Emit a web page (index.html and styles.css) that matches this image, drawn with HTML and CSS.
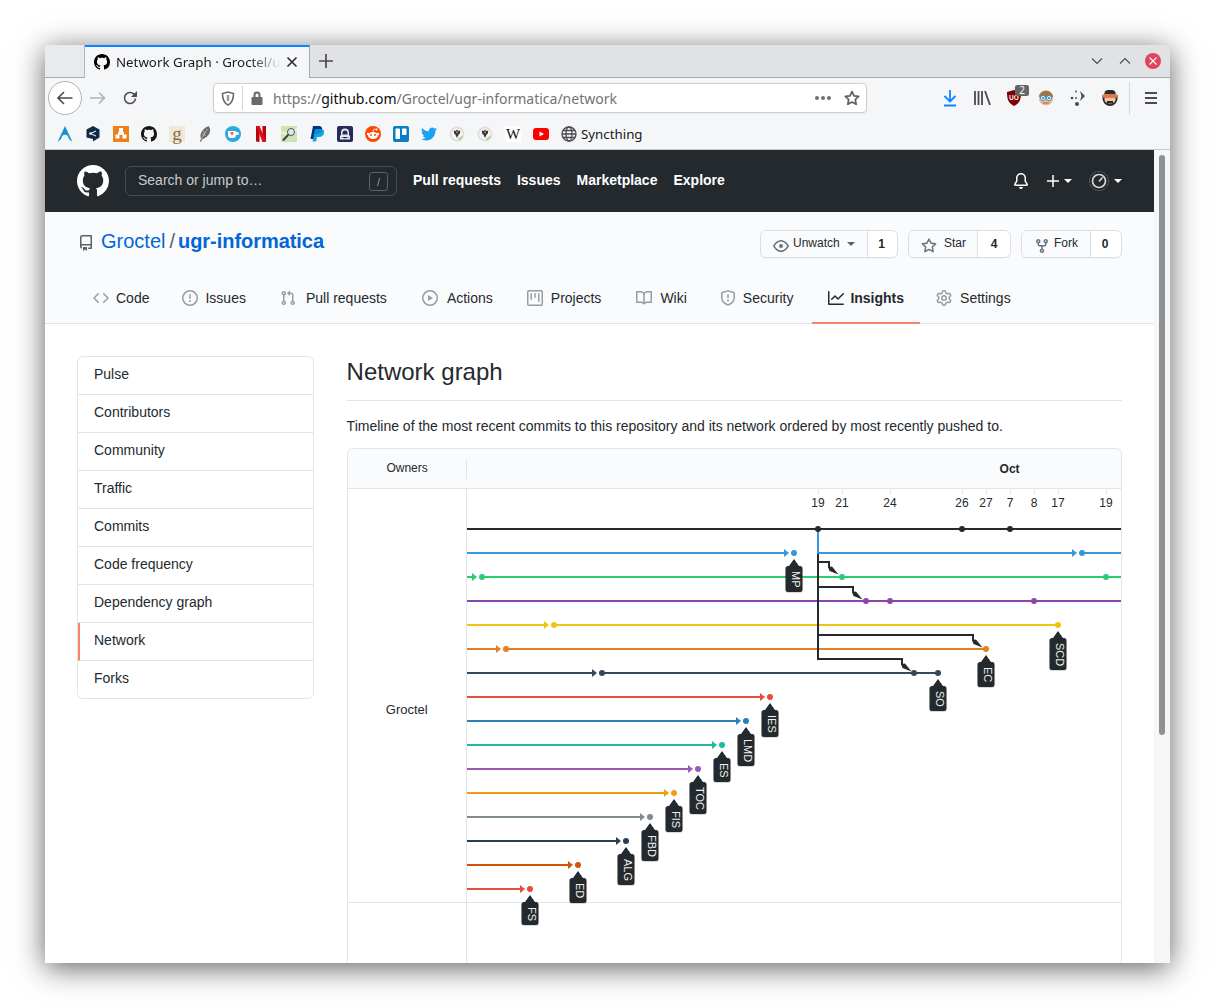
FILE: index.html
```html
<!DOCTYPE html>
<html lang="en">
<head>
<meta charset="utf-8">
<title>Network Graph · Groctel/ugr-informatica</title>
<link rel="stylesheet" href="styles.css">
</head>
<body>
<svg class="sprites" width="0" height="0" aria-hidden="true">
  <defs>
    <symbol id="i-mark" viewBox="0 0 16 16"><path d="M8 0C3.58 0 0 3.58 0 8c0 3.54 2.29 6.53 5.47 7.59.4.07.55-.17.55-.38 0-.19-.01-.82-.01-1.49-2.01.37-2.53-.49-2.69-.94-.09-.23-.48-.94-.82-1.13-.28-.15-.68-.52-.01-.53.63-.01 1.08.58 1.23.82.72 1.21 1.87.87 2.33.66.07-.52.28-.87.51-1.07-1.78-.2-3.64-.89-3.64-3.95 0-.87.31-1.59.82-2.15-.08-.2-.36-1.02.08-2.12 0 0 .67-.21 2.2.82.64-.18 1.32-.27 2-.27.68 0 1.36.09 2 .27 1.53-1.04 2.2-.82 2.2-.82.44 1.1.16 1.92.08 2.12.51.56.82 1.27.82 2.15 0 3.07-1.87 3.75-3.65 3.95.29.25.54.73.54 1.48 0 1.07-.01 1.93-.01 2.2 0 .21.15.46.55.38A8.013 8.013 0 0016 8c0-4.42-3.58-8-8-8z"/></symbol>
    <symbol id="i-crest" viewBox="0 0 16 16"><circle cx="8" cy="8" r="7.500" fill="#dedede"/><circle cx="8" cy="8" r="5.800" fill="#f4f4f4"/><path d="M8 3.500l1.200 1.400 2.100-.4-.5 3-1.300 1.200L8 12 6.500 8.700 5.200 7.500l-.5-3 2.100.4z" fill="#3a3431"/><path d="M7.200 5.300h1.600v2H7.200z" fill="#c8873a"/><path d="M9 12.500l2-1 2-2 .5 2-3 3z" fill="#a9d18e"/></symbol>
  </defs>
</svg>

<div class="window">
  <div class="tabbar">
    <div class="tab-spacer"></div>
    <div class="tab">
      <svg class="fav" width="16" height="16"><use href="#i-mark"/></svg>
      <span class="tab-title">Network Graph · Groctel/u</span>
      <svg class="tab-x" width="12" height="12" viewBox="0 0 12 12"><path d="M1.500 1.500l9 9m0-9l-9 9"/></svg>
    </div>
    <svg class="newtab" width="16" height="16" viewBox="0 0 16 16"><path d="M8 1v14M1 8h14"/></svg>
    <div class="winctl">
      <svg class="chev" width="12" height="8" viewBox="0 0 12 8"><path d="M1 1.500l5 5 5-5"/></svg>
      <svg class="chev up" width="12" height="8" viewBox="0 0 12 8"><path d="M1 6.500l5-5 5 5"/></svg>
      <svg class="close" width="16" height="16" viewBox="0 0 16 16"><circle cx="8" cy="8" r="8"/><path d="M4.500 4.500l7 7m0-7l-7 7"/></svg>
    </div>
  </div>

  <div class="toolbar">
    <div class="backbtn"><svg class="tb" width="18" height="16" viewBox="0 0 18 16"><path d="M16.500 8H2M8 2L2 8l6 6"/></svg></div>
    <svg class="tb fwd" width="16" height="14" viewBox="0 0 16 14"><path d="M0 7h14M9 1.500L14.500 7 9 12.500"/></svg>
    <svg class="tb reload" width="16" height="16" viewBox="0 0 16 16"><path d="M13.500 8.500a5.500 5.500 0 11-1.800-4.600L14 6"/><path class="solid" d="M15 1v6H9z"/></svg>
    <div class="urlbar">
      <svg class="shield" width="14" height="15" viewBox="0 0 14 15"><path d="M7 1l5.500 1.500c0 6-1 9.500-5.500 11.500C2.500 12 1.500 8.500 1.500 2.500z"/><path class="thin" d="M7 4v6"/></svg>
      <span class="urlsep"></span>
      <svg class="lock" width="12" height="14" viewBox="0 0 12 14"><path d="M2.500 6V4a3.500 3.500 0 017 0v2h1a1 1 0 011 1v6a1 1 0 01-1 1h-9a1 1 0 01-1-1V7a1 1 0 011-1zm2 0h3V4a1.500 1.500 0 00-3 0z"/></svg>
      <span class="url">https://<b>github.com</b>/Groctel/ugr-informatica/network</span>
      <span class="dots"><i></i><i></i><i></i></span>
      <svg class="urlstar" width="16" height="16" viewBox="0 0 16 16"><path d="M8 1.500l2 4.300 4.700.6-3.400 3.200.9 4.700L8 12l-4.200 2.300.9-4.700L1.300 6.400 6 5.800z"/></svg>
    </div>
    <div class="tb-right">
      <span class="tbi"><svg width="16" height="18" viewBox="0 0 16 18"><path class="dl" d="M8 1v11M2.500 7L8 12.500 13.500 7M2 16.500h12"/></svg></span>
      <span class="tbi"><svg width="18" height="14" viewBox="0 0 18 14"><path class="lib" d="M2 0v14M5.500 0v14M9 0v14M12 0l5 14"/></svg></span>
      <span class="tbi ublock"><svg width="14" height="16" viewBox="0 0 14 16"><path d="M7 0l7 2c0 7-1 11-7 14C1 13 0 9 0 2z" fill="#800000"/></svg><em>UO</em><span class="badge">2</span></span>
      <span class="tbi"><svg width="16" height="16" viewBox="0 0 16 16"><circle cx="8" cy="8.500" r="7" fill="#e8b88f"/><path d="M1 7a7 6.500 0 0114 0z" fill="#a9713c"/><circle cx="5" cy="8" r="2.500" fill="#fff" stroke="#2d8dd0"/><circle cx="11" cy="8" r="2.500" fill="#fff" stroke="#2d8dd0"/><circle cx="5" cy="8" r="1" fill="#2d6ea0"/><circle cx="11" cy="8" r="1" fill="#2d6ea0"/><path d="M5 13h6" stroke="#c0653f"/></svg></span>
      <span class="tbi"><svg width="16" height="16" viewBox="0 0 16 16" fill="#4a4a4f"><path d="M10 1l5 5-5 5 1.500-5z"/><circle cx="7" cy="14" r="2"/><circle cx="2" cy="8" r="1.300"/><circle cx="6" cy="1.500" r=".9"/><circle cx="6" cy="8" r=".9"/></svg></span>
      <span class="tbi"><svg width="16" height="16" viewBox="0 0 16 16"><path d="M.5 8.500a7.500 7.500 0 0015 0V5H.5z" fill="#2b2b2b"/><path d="M3 1.500a6 4 0 0110 0l1 3H2z" fill="#2b2b2b"/><path d="M.5 4.500h15v3H.5z" fill="#f0752c"/><path d="M2.500 7.500h11v2.500a5.500 3.500 0 01-11 0z" fill="#f5c6a5"/><path d="M5 11h6v2H5z" fill="#2b2b2b"/></svg></span>
      <span class="tbsep"></span>
      <svg class="burger" width="14" height="12" viewBox="0 0 14 12"><path d="M1 1h12M1 6h12M1 11h12"/></svg>
    </div>
  </div>

  <div class="bookmarks">
    <span class="bm"><svg width="16" height="16" viewBox="0 0 16 16"><path d="M8 0l7.500 16c-2-1.500-4-3-4.500-5.500C10 8 6 8 5 10.500 4.500 13 2.500 14.500.5 16z" fill="#1793d1"/></svg></span>
    <span class="bm"><svg width="16" height="16" viewBox="0 0 16 16"><path d="M8 0l6.500 3.500v8L8 15.500V13L1.500 11.500v-8z" fill="#0f2b46"/><path d="M5.500 7.500L11 5M5.500 7.500L11 10" stroke="#fff" fill="none"/><circle cx="5.500" cy="7.500" r="1.300" fill="#fff"/></svg></span>
    <span class="bm"><svg width="16" height="16" viewBox="0 0 16 16"><path d="M0 0h16v16H0z" fill="#ee7f1a"/><path d="M6 2h4v4H6zM2.500 8.500h4v4h-4zM9.500 8.500h4v4h-4zM5 6h6v3H5z" fill="#fff"/></svg></span>
    <span class="bm"><svg width="16" height="16" fill="#161614"><use href="#i-mark"/></svg></span>
    <span class="bm bm-g">g</span>
    <span class="bm"><svg width="16" height="16" viewBox="0 0 16 16"><path d="M11.500 0c3 3 2 9-3.500 12l-3 1.500-1 2.500-1-.5 1-3C2 8 6 2 11.500 0z" fill="#6b6b6b"/><path d="M10.500 3L4 13M6 5l2 3M5 8l3.500 1.500" stroke="#ddd" stroke-width=".6" fill="none"/></svg></span>
    <span class="bm"><svg width="16" height="16" viewBox="0 0 16 16"><circle cx="8" cy="8" r="8" fill="#29abe0"/><path d="M3 5h8v4a3 3 0 01-3 3H6a3 3 0 01-3-3zM11 6h1.500a1.500 1.500 0 010 3H11" fill="#fff"/><path d="M7 6.300c-1.500-1-2.500.8-1 2L7 9.500l1-1.200c1.500-1.200.5-3-1-2z" fill="#ff5e5b"/></svg></span>
    <span class="bm"><svg width="16" height="16" viewBox="0 0 16 16"><path d="M3 0h3.500v16L3 15.500zM9.500 0H13v15.500L9.500 16z" fill="#b1060f"/><path d="M3 0h3.500l6.500 15.500L9.500 16z" fill="#e50914"/></svg></span>
    <span class="bm"><svg width="16" height="16" viewBox="0 0 16 16"><path d="M0 0h16v16H0z" fill="#cfe3b4"/><path d="M0 5l6 2 10-5v3L8 10l-8-2z" fill="#e9f1d7"/><circle cx="10" cy="6" r="3.500" fill="#dbe9f4" stroke="#555"/><path d="M7.500 8.500L2 14.500" stroke="#444" stroke-width="2"/></svg></span>
    <span class="bm"><svg width="16" height="16" viewBox="0 0 16 16"><path d="M4 0h5.500c3 0 4 2 3.500 4-.5 3-3 4-5 4H6l-1 5H1.500z" fill="#003087"/><path d="M6 3h6c2.500 0 3.500 2 3 4-.5 2.500-2.500 4-5 4H8l-.8 4.500H3.500z" fill="#009cde" opacity=".9"/></svg></span>
    <span class="bm"><svg width="16" height="16" viewBox="0 0 16 16"><rect width="16" height="16" rx="2" fill="#262a5c"/><path d="M8 2.500a4 4 0 014 4V9l1 1v3.500H3V10l1-1V6.500a4 4 0 014-4z" fill="#e4e4ee"/><path d="M5.500 7a2.500 2.500 0 015 0v1.500h-5zM4 11l4 1.500 4-1.500" fill="#262a5c"/></svg></span>
    <span class="bm"><svg width="16" height="16" viewBox="0 0 16 16"><circle cx="8" cy="8" r="8" fill="#ff4500"/><ellipse cx="8" cy="9.500" rx="5" ry="3.500" fill="#fff"/><circle cx="3" cy="8" r="1.200" fill="#fff"/><circle cx="13" cy="8" r="1.200" fill="#fff"/><circle cx="11.500" cy="3.500" r="1" fill="#fff"/><path d="M8 6l1-3 2.500.5" stroke="#fff" fill="none" stroke-width=".7"/><circle cx="6" cy="9" r="1" fill="#ff4500"/><circle cx="10" cy="9" r="1" fill="#ff4500"/></svg></span>
    <span class="bm"><svg width="16" height="16" viewBox="0 0 16 16"><rect width="16" height="16" rx="2" fill="#0c7cc7"/><rect x="2.500" y="2.500" width="4.500" height="10.500" rx=".7" fill="#fff"/><rect x="9" y="2.500" width="4.500" height="6.500" rx=".7" fill="#fff"/></svg></span>
    <span class="bm"><svg width="16" height="14" viewBox="0 0 24 20" fill="#1da1f2"><path d="M23.953 2.570a10 10 0 01-2.825.775 4.958 4.958 0 002.163-2.723c-.951.555-2.005.959-3.127 1.184a4.920 4.920 0 00-8.384 4.482C7.690 6.095 4.067 4.130 1.640 1.162a4.822 4.822 0 00-.666 2.475c0 1.710.870 3.213 2.188 4.096a4.904 4.904 0 01-2.228-.616v.060a4.923 4.923 0 003.946 4.827 4.996 4.996 0 01-2.212.085 4.936 4.936 0 004.604 3.417 9.867 9.867 0 01-6.102 2.105c-.390 0-.779-.023-1.170-.067a13.995 13.995 0 007.557 2.209c9.053 0 13.998-7.496 13.998-13.985 0-.210 0-.420-.015-.630A9.935 9.935 0 0024 2.590z"/></svg></span>
    <span class="bm"><svg width="16" height="16"><use href="#i-crest"/></svg></span>
    <span class="bm"><svg width="16" height="16"><use href="#i-crest"/></svg></span>
    <span class="bm bm-w">W</span>
    <span class="bm"><svg width="16" height="12" viewBox="0 0 16 12"><rect width="16" height="12" rx="3" fill="#f00"/><path d="M6.500 3.500L11 6l-4.500 2.500z" fill="#fff"/></svg></span>
    <span class="bm bm-sync"><svg width="16" height="16" viewBox="0 0 16 16"><g class="globe"><circle cx="8" cy="8" r="7"/><ellipse cx="8" cy="8" rx="3" ry="7"/><path d="M1 8h14M2 4.500h12M2 11.500h12"/></g></svg><span>Syncthing</span></span>
  </div>

  <div class="viewport">
    <div class="page">
      <header class="gh-head">
        <svg class="gh-logo" width="32" height="32"><use href="#i-mark"/></svg>
        <div class="search">
          <span>Search or jump to…</span>
          <kbd>/</kbd>
        </div>
        <nav class="gh-nav"><a>Pull requests</a><a>Issues</a><a>Marketplace</a><a>Explore</a></nav>
        <div class="gh-right">
          <svg class="gh-ico" width="16" height="16" viewBox="0 0 16 16"><path d="M8 16a2 2 0 001.985-1.750c.017-.137-.097-.250-.235-.250h-3.500c-.138 0-.252.113-.235.250A2 2 0 008 16z"/><path fill-rule="evenodd" d="M8 1.500A3.500 3.500 0 004.500 5v2.947c0 .346-.102.683-.294.970l-1.703 2.556a.018.018 0 00-.003.010l.001.006c0 .002.002.004.004.006a.017.017 0 00.006.004l.007.001h10.964l.007-.001a.018.018 0 00.006-.004.016.016 0 00.004-.006l.001-.007a.017.017 0 00-.003-.010l-1.703-2.554a1.750 1.750 0 01-.294-.970V5A3.500 3.500 0 008 1.500zM3 5a5 5 0 0110 0v2.947c0 .050.015.098.042.139l1.703 2.555A1.518 1.518 0 0113.482 13H2.518a1.518 1.518 0 01-1.263-2.360l1.703-2.554A.250.250 0 003 7.947V5z"/></svg>
          <svg class="gh-ico plus" width="12" height="12" viewBox="0 0 12 12"><path d="M5.250 0h1.500v5.250H12v1.500H6.750V12h-1.500V6.750H0v-1.500h5.250z"/></svg>
          <i class="caret"></i>
          <svg class="avatar" width="20" height="20" viewBox="0 0 20 20"><circle cx="10" cy="10" r="9.500" class="av-o"/><circle cx="10" cy="10" r="6.500" class="av-i"/><path class="av-i" d="M10 10.500l3.500-4"/></svg>
          <i class="caret"></i>
        </div>
      </header>

      <div class="repohead">
        <div class="repotop">
          <h1 class="reponame">
            <svg class="ico-repo" width="14" height="16" viewBox="2 0 12 16"><path fill-rule="evenodd" d="M2 2.500A2.500 2.500 0 014.500 0h8.750a.75.75 0 01.75.75v12.500a.75.75 0 01-.75.75h-2.500a.75.75 0 110-1.500h1.750v-2h-8a1 1 0 00-.714 1.700.75.75 0 01-1.072 1.050A2.495 2.495 0 012 11.500v-9zm10.500-1V9h-8c-.356 0-.694.074-1 .208V2.500a1 1 0 011-1h8zM5 12.250v3.250a.25.25 0 00.4.2l1.450-1.087a.25.25 0 01.3 0L8.600 15.700a.25.25 0 00.4-.2v-3.250a.25.25 0 00-.25-.25h-3.500a.25.25 0 00-.25.25z"/></svg>
            <a>Groctel</a><span class="slash">/</span><a class="strong">ugr-informatica</a>
          </h1>
          <div class="actions">
            <div class="btnpair">
              <span class="btn w-watch"><svg class="octi" width="16" height="16" viewBox="0 0 16 16"><path d="M1.679 7.932c.412-.621 1.242-1.750 2.366-2.717C5.175 4.242 6.527 3.500 8 3.500c1.473 0 2.824.742 3.955 1.715 1.124.967 1.954 2.096 2.366 2.717a.119.119 0 010 .136c-.412.621-1.242 1.750-2.366 2.717C10.825 11.758 9.473 12.500 8 12.500c-1.473 0-2.824-.742-3.955-1.715C2.920 9.818 2.090 8.690 1.679 8.068a.119.119 0 010-.136zM8 2c-1.981 0-3.670.992-4.933 2.078C1.797 5.169.880 6.423.430 7.100a1.619 1.619 0 000 1.798c.450.678 1.367 1.932 2.637 3.024C4.329 13.008 6.019 14 8 14c1.981 0 3.670-.992 4.933-2.078 1.270-1.091 2.187-2.345 2.637-3.023a1.619 1.619 0 000-1.798c-.450-.678-1.367-1.932-2.637-3.023C11.671 2.992 9.981 2 8 2zm0 8a2 2 0 100-4 2 2 0 000 4z"/></svg><span class="btxt">Unwatch</span><i class="caret dark"></i></span>
              <span class="count w-c1">1</span>
            </div>
            <div class="btnpair">
              <span class="btn w-star"><svg class="octi" width="16" height="16" viewBox="0 0 16 16"><path fill-rule="evenodd" d="M8 .250a.750.750 0 01.673.418l1.882 3.815 4.210.612a.750.750 0 01.416 1.279l-3.046 2.970.719 4.192a.750.750 0 01-1.088.791L8 12.347l-3.766 1.980a.750.750 0 01-1.088-.790l.720-4.194L.818 6.374a.750.750 0 01.416-1.280l4.210-.611L7.327.668A.750.750 0 018 .250zm0 2.445L6.615 5.500a.750.750 0 01-.564.410l-3.097.450 2.240 2.184a.750.750 0 01.216.664l-.528 3.084 2.769-1.456a.750.750 0 01.698 0l2.770 1.456-.530-3.084a.750.750 0 01.216-.664l2.240-2.183-3.096-.450a.750.750 0 01-.564-.410L8 2.694v.001z"/></svg><span class="btxt">Star</span></span>
              <span class="count w-c2">4</span>
            </div>
            <div class="btnpair">
              <span class="btn w-fork"><svg class="octi" width="16" height="16" viewBox="0 0 16 16"><path fill-rule="evenodd" d="M5 3.250a.750.750 0 11-1.500 0 .750.750 0 011.500 0zm0 2.122a2.250 2.250 0 10-1.500 0v.878A2.250 2.250 0 005.750 8.500h1.500v2.128a2.251 2.251 0 101.500 0V8.500h1.500a2.250 2.250 0 002.250-2.250v-.878a2.250 2.250 0 10-1.500 0v.878a.750.750 0 01-.750.750h-4.500A.750.750 0 015 6.250v-.878zm3.750 7.378a.750.750 0 11-1.500 0 .750.750 0 011.500 0zm3-8.750a.750.750 0 100-1.500.750.750 0 000 1.500z"/></svg><span class="btxt">Fork</span></span>
              <span class="count w-c3">0</span>
            </div>
          </div>
        </div>
        <nav class="repotabs">
          <a class="rt"><svg class="octi" width="16" height="16" viewBox="0 0 16 16"><path d="M4.720 3.220a.750.750 0 011.060 1.060L2.060 8l3.720 3.720a.750.750 0 11-1.060 1.060L.470 8.530a.750.750 0 010-1.060l4.250-4.250zm6.560 0a.750.750 0 10-1.060 1.060L13.940 8l-3.720 3.720a.750.750 0 101.060 1.060l4.250-4.250a.750.750 0 000-1.060l-4.250-4.250z"/></svg>Code</a>
          <a class="rt"><svg class="octi" width="16" height="16" viewBox="0 0 16 16"><path fill-rule="evenodd" d="M8 1.500a6.500 6.500 0 100 13 6.500 6.500 0 000-13zM0 8a8 8 0 1116 0A8 8 0 010 8zm9 3a1 1 0 11-2 0 1 1 0 012 0zm-.250-6.250a.750.750 0 00-1.500 0v3.500a.750.750 0 001.500 0v-3.500z"/></svg>Issues</a>
          <a class="rt"><svg class="octi" width="16" height="16" viewBox="0 0 16 16"><path fill-rule="evenodd" d="M7.177 3.073L9.573.677A.250.250 0 0110 .854v4.792a.250.250 0 01-.427.177L7.177 3.427a.250.250 0 010-.354zM3.750 2.500a.750.750 0 100 1.500.750.750 0 000-1.500zm-2.250.750a2.250 2.250 0 113 2.122v5.256a2.251 2.251 0 11-1.500 0V5.372A2.250 2.250 0 011.500 3.250zM11 2.500h-1V4h1a1 1 0 011 1v5.628a2.251 2.251 0 101.500 0V5A2.500 2.500 0 0011 2.500zm1 10.250a.750.750 0 111.500 0 .750.750 0 01-1.500 0zM3.750 12a.750.750 0 100 1.500.750.750 0 000-1.500z"/></svg>Pull requests</a>
          <a class="rt"><svg class="octi" width="16" height="16" viewBox="0 0 16 16"><path fill-rule="evenodd" d="M1.500 8a6.500 6.500 0 1113 0 6.500 6.500 0 01-13 0zM8 0a8 8 0 100 16A8 8 0 008 0zM6.379 5.227A.250.250 0 006 5.442v5.117a.250.250 0 00.379.214l4.264-2.559a.250.250 0 000-.428L6.379 5.227z"/></svg>Actions</a>
          <a class="rt"><svg class="octi" width="16" height="16" viewBox="0 0 16 16"><path fill-rule="evenodd" d="M1.750 0A1.750 1.750 0 000 1.750v12.500C0 15.216.784 16 1.750 16h12.500A1.750 1.750 0 0016 14.250V1.750A1.750 1.750 0 0014.250 0H1.750zM1.500 1.750a.250.250 0 01.250-.250h12.500a.250.250 0 01.250.250v12.500a.250.250 0 01-.250.250H1.750a.250.250 0 01-.250-.250V1.750zM11.750 3a.750.750 0 00-.750.750v7.500a.750.750 0 001.500 0v-7.500a.750.750 0 00-.750-.750zm-8.250.750a.750.750 0 011.500 0v5.500a.750.750 0 01-1.500 0v-5.500zM8 3a.750.750 0 00-.750.750v3.500a.750.750 0 001.500 0v-3.500A.750.750 0 008 3z"/></svg>Projects</a>
          <a class="rt"><svg class="octi" width="16" height="16" viewBox="0 0 16 16"><path fill-rule="evenodd" d="M0 1.750A.750.750 0 01.750 1h4.253c1.227 0 2.317.590 3 1.501A3.744 3.744 0 0111.006 1h4.245a.750.750 0 01.750.750v10.500a.750.750 0 01-.750.750h-4.507a2.250 2.250 0 00-1.591.659l-.622.621a.750.750 0 01-1.060 0l-.622-.621A2.250 2.250 0 005.258 13H.750a.750.750 0 01-.750-.750V1.750zm8.755 3a2.250 2.250 0 012.250-2.250H14.500v9h-3.757c-.710 0-1.400.201-1.992.572l.004-7.322zm-1.504 7.324l.004-5.073-.002-2.253A2.250 2.250 0 005.003 2.500H1.500v9h3.757a3.750 3.750 0 011.994.574z"/></svg>Wiki</a>
          <a class="rt"><svg class="octi" width="16" height="16" viewBox="0 0 16 16"><path fill-rule="evenodd" d="M7.467.133a1.750 1.750 0 011.066 0l5.250 1.680A1.750 1.750 0 0115 3.480V7c0 1.566-.320 3.182-1.303 4.682-.983 1.498-2.585 2.813-5.032 3.855a1.700 1.700 0 01-1.330 0c-2.447-1.042-4.049-2.357-5.032-3.855C1.320 10.182 1 8.566 1 7V3.480a1.750 1.750 0 011.217-1.667l5.250-1.680zm.610 1.429a.250.250 0 00-.153 0l-5.250 1.680a.250.250 0 00-.174.238V7c0 1.358.275 2.666 1.057 3.860.784 1.194 2.121 2.340 4.366 3.297a.200.200 0 00.154 0c2.245-.956 3.582-2.104 4.366-3.298C13.225 9.666 13.500 8.360 13.500 7V3.480a.250.250 0 00-.174-.237l-5.250-1.680zM9 10.500a1 1 0 11-2 0 1 1 0 012 0zm-.250-5.750a.750.750 0 10-1.500 0v3a.750.750 0 001.500 0v-3z"/></svg>Security</a>
          <a class="rt active"><svg class="octi" width="16" height="16" viewBox="0 0 16 16"><path fill-rule="evenodd" d="M1.500 1.750a.750.750 0 00-1.500 0v12.500c0 .414.336.750.750.750h14.500a.750.750 0 000-1.500H1.500V1.750zm14.280 2.530a.750.750 0 00-1.060-1.060L10 7.940 7.530 5.470a.750.750 0 00-1.060 0L3.220 8.720a.750.750 0 001.060 1.060L7 7.060l2.470 2.470a.750.750 0 001.060 0l5.250-5.250z"/></svg>Insights</a>
          <a class="rt"><svg class="octi" width="16" height="16" viewBox="0 0 16 16"><path fill-rule="evenodd" d="M7.429 1.525a6.593 6.593 0 011.142 0c.036.003.108.036.137.146l.289 1.105c.147.561.549.967.998 1.189.173.086.34.183.5.29.417.278.97.423 1.529.27l1.103-.303c.109-.03.175.016.195.046.219.31.41.641.573.989.014.031.021.11-.059.19l-.815.806c-.411.406-.562.957-.53 1.456a4.588 4.588 0 010 .582c-.032.499.119 1.05.53 1.456l.815.806c.08.08.073.159.059.19a6.494 6.494 0 01-.573.99c-.02.029-.086.074-.195.045l-1.103-.303c-.559-.153-1.112-.008-1.529.27-.16.107-.327.204-.5.29-.449.222-.851.628-.998 1.189l-.289 1.105c-.029.11-.101.143-.137.146a6.613 6.613 0 01-1.142 0c-.036-.003-.108-.037-.137-.146l-.289-1.105c-.147-.561-.549-.967-.998-1.189a4.502 4.502 0 01-.5-.29c-.417-.278-.97-.423-1.529-.27l-1.103.303c-.109.03-.175-.016-.195-.045a6.492 6.492 0 01-.573-.989c-.014-.031-.021-.11.059-.19l.815-.806c.411-.406.562-.957.53-1.456a4.587 4.587 0 010-.582c.032-.499-.119-1.05-.53-1.456l-.815-.806c-.08-.08-.073-.159-.059-.19a6.44 6.44 0 01.573-.99c.02-.029.086-.075.195-.045l1.103.303c.559.153 1.112.008 1.529-.27.16-.107.327-.204.5-.29.449-.222.851-.628.998-1.189l.289-1.105c.029-.11.101-.143.137-.146zM8 0c-.236 0-.47.01-.701.03-.743.065-1.29.615-1.458 1.261l-.29 1.106c-.017.066-.078.158-.211.224a5.994 5.994 0 00-.668.386c-.123.082-.233.09-.3.071L3.27 2.776c-.644-.177-1.392.02-1.82.63a7.977 7.977 0 00-.704 1.217c-.315.675-.111 1.422.363 1.891l.815.806c.05.048.098.147.088.294a6.084 6.084 0 000 .772c.01.147-.038.246-.088.294l-.815.806c-.474.469-.678 1.216-.363 1.891.2.428.436.835.704 1.218.428.609 1.176.806 1.82.63l1.103-.303c.066-.019.176-.011.299.071.213.143.436.272.668.386.133.066.194.158.212.224l.289 1.106c.169.646.715 1.196 1.458 1.26a8.094 8.094 0 001.402 0c.743-.064 1.29-.614 1.458-1.26l.29-1.106c.017-.066.078-.158.211-.224a5.98 5.98 0 00.668-.386c.123-.082.233-.09.3-.071l1.102.302c.644.177 1.392-.02 1.82-.63.268-.382.505-.789.704-1.217.315-.675.111-1.422-.364-1.891l-.814-.806c-.05-.048-.098-.147-.088-.294a6.1 6.1 0 000-.772c-.01-.147.039-.246.088-.294l.814-.806c.475-.469.679-1.216.364-1.891a7.992 7.992 0 00-.704-1.218c-.428-.609-1.176-.806-1.82-.63l-1.103.303c-.066.019-.176.011-.299-.071a5.991 5.991 0 00-.668-.386c-.133-.066-.194-.158-.212-.224L10.160 1.290C9.990.645 9.444.095 8.701.031A8.094 8.094 0 008 0zm1.500 8a1.500 1.500 0 11-3 0 1.500 1.500 0 013 0zM11 8a3 3 0 11-6 0 3 3 0 016 0z"/></svg>Settings</a>
        </nav>
      </div>

      <div class="main">
        <aside class="side">
          <a>Pulse</a><a>Contributors</a><a>Community</a><a>Traffic</a><a>Commits</a><a>Code frequency</a><a>Dependency graph</a><a class="sel">Network</a><a>Forks</a>
        </aside>
        <section class="content">
          <h2>Network graph</h2>
          <p>Timeline of the most recent commits to this repository and its network ordered by most recently pushed to.</p>
          <div class="graph">
            <div class="gh">
              <div class="gh-owners">Owners</div>
              <div class="gh-month">Oct</div>
            </div>
            <div class="gbody">
              <div class="owners"><div class="owner1">Groctel</div><div class="owner2"></div></div>
              <svg class="chart" viewBox="467 489 654 474" width="654" height="474">
                <line class="rowline" x1="467" y1="902.500" x2="1121" y2="902.500"/>
                <g class="ticks">
                  <path d="M818.500 489v5M842.500 489v5M890.500 489v5M962.500 489v5M986.500 489v5M1010.500 489v5M1034.500 489v5M1058.500 489v5M1106.500 489v5"/>
                </g>
                <g class="dates">
                  <text x="818" y="507">19</text><text x="842" y="507">21</text><text x="890" y="507">24</text><text x="962" y="507">26</text><text x="986" y="507">27</text><text x="1010" y="507">7</text><text x="1034" y="507">8</text><text x="1058" y="507">17</text><text x="1106" y="507">19</text>
                </g>

                <g class="c0"><path class="l" d="M467 529H1121"/></g>
                <g class="c2"><path class="l" d="M467 577H473M482 577H1121"/><path d="M472 573l5 4-5 4z"/><circle cx="482" cy="577" r="3"/><circle cx="842" cy="577" r="3"/><circle cx="1106" cy="577" r="3"/></g>
                <g class="c3"><path class="l" d="M467 601H1121"/><circle cx="866" cy="601" r="3"/><circle cx="890" cy="601" r="3"/><circle cx="1034" cy="601" r="3"/></g>
                <g class="c4"><path class="l" d="M467 625H545M554 625H1058"/><path d="M544 621l5 4-5 4z"/><circle cx="554" cy="625" r="3"/><circle cx="1058" cy="625" r="3"/></g>
                <g class="c5"><path class="l" d="M467 649H497M506 649H986"/><path d="M496 645l5 4-5 4z"/><circle cx="506" cy="649" r="3"/><circle cx="986" cy="649" r="3"/></g>
                <g class="c6"><path class="l" d="M467 673H593M602 673H938"/><path d="M592 669l5 4-5 4z"/><circle cx="602" cy="673" r="3"/><circle cx="914" cy="673" r="3"/><circle cx="938" cy="673" r="3"/></g>
                <g class="c7"><path class="l" d="M467 697H761"/><path d="M760 693l5 4-5 4z"/><circle cx="770" cy="697" r="3"/></g>
                <g class="c8"><path class="l" d="M467 721H737"/><path d="M736 717l5 4-5 4z"/><circle cx="746" cy="721" r="3"/></g>
                <g class="c9"><path class="l" d="M467 745H713"/><path d="M712 741l5 4-5 4z"/><circle cx="722" cy="745" r="3"/></g>
                <g class="c10"><path class="l" d="M467 769H689"/><path d="M688 765l5 4-5 4z"/><circle cx="698" cy="769" r="3"/></g>
                <g class="c11"><path class="l" d="M467 793H665"/><path d="M664 789l5 4-5 4z"/><circle cx="674" cy="793" r="3"/></g>
                <g class="c12"><path class="l" d="M467 817H641"/><path d="M640 813l5 4-5 4z"/><circle cx="650" cy="817" r="3"/></g>
                <g class="c13"><path class="l" d="M467 841H617"/><path d="M616 837l5 4-5 4z"/><circle cx="626" cy="841" r="3"/></g>
                <g class="c14"><path class="l" d="M467 865H569"/><path d="M568 861l5 4-5 4z"/><circle cx="578" cy="865" r="3"/></g>
                <g class="c15"><path class="l" d="M467 889H521"/><path d="M520 885l5 4-5 4z"/><circle cx="530" cy="889" r="3"/></g>

                <g class="branch">
                  <path class="bl" d="M818 553V659H902V665M818 635H973V641M818 587H853V593M818 562H829V568"/>
                  <path d="M828 567l4-.5 6.500 8-9-3.500zM852 592l4-.5 6.500 8-9-3.500zM972 640l4-.5 6.500 8-9-3.500zM901 664l4-.5 6.500 8-9-3.500z"/>
                </g>
                <g class="c1"><path class="l" d="M467 553H785M818 529V553H1073M1082 553H1121"/><path d="M784 549l5 4-5 4zM1072 549l5 4-5 4z"/><circle cx="794" cy="553" r="3"/><circle cx="1082" cy="553" r="3"/></g>
                <g class="c0"><circle cx="818" cy="529" r="3"/><circle cx="962" cy="529" r="3"/><circle cx="1010" cy="529" r="3"/></g>

                <g class="tags">
                  <path d="M794 559l5 7h1a2.500 2.500 0 012.500 2.500v21a2.500 2.500 0 01-2.500 2.500h-12a2.500 2.500 0 01-2.500-2.500v-21a2.500 2.500 0 012.500-2.500h1z"/>
                  <path d="M1058 631l5 7h1a2.500 2.500 0 012.500 2.500v27a2.500 2.500 0 01-2.500 2.500h-12a2.500 2.500 0 01-2.500-2.500v-27a2.500 2.500 0 012.500-2.500h1z"/>
                  <path d="M986 655l5 7h1a2.500 2.500 0 012.500 2.500v20a2.500 2.500 0 01-2.500 2.500h-12a2.500 2.500 0 01-2.500-2.500v-20a2.500 2.500 0 012.500-2.500h1z"/>
                  <path d="M938 679l5 7h1a2.500 2.500 0 012.500 2.500v20a2.500 2.500 0 01-2.500 2.500h-12a2.500 2.500 0 01-2.500-2.500v-20a2.500 2.500 0 012.500-2.500h1z"/>
                  <path d="M770 703l5 7h1a2.500 2.500 0 012.500 2.500v22a2.500 2.500 0 01-2.500 2.500h-12a2.500 2.500 0 01-2.500-2.500v-22a2.500 2.500 0 012.500-2.500h1z"/>
                  <path d="M746 727l5 7h1a2.500 2.500 0 012.500 2.500v27a2.500 2.500 0 01-2.500 2.500h-12a2.500 2.500 0 01-2.500-2.500v-27a2.500 2.500 0 012.500-2.500h1z"/>
                  <path d="M722 751l5 7h1a2.500 2.500 0 012.500 2.500v19a2.500 2.500 0 01-2.500 2.500h-12a2.500 2.500 0 01-2.500-2.500v-19a2.500 2.500 0 012.500-2.500h1z"/>
                  <path d="M698 775l5 7h1a2.500 2.500 0 012.500 2.500v27a2.500 2.500 0 01-2.500 2.500h-12a2.500 2.500 0 01-2.500-2.500v-27a2.500 2.500 0 012.500-2.500h1z"/>
                  <path d="M674 799l5 7h1a2.500 2.500 0 012.500 2.500v21a2.500 2.500 0 01-2.500 2.500h-12a2.500 2.500 0 01-2.500-2.500v-21a2.500 2.500 0 012.500-2.500h1z"/>
                  <path d="M650 823l5 7h1a2.500 2.500 0 012.500 2.500v26a2.500 2.500 0 01-2.500 2.500h-12a2.500 2.500 0 01-2.500-2.500v-26a2.500 2.500 0 012.500-2.500h1z"/>
                  <path d="M626 847l5 7h1a2.500 2.500 0 012.500 2.500v26a2.500 2.500 0 01-2.500 2.500h-12a2.500 2.500 0 01-2.500-2.500v-26a2.500 2.500 0 012.500-2.500h1z"/>
                  <path d="M578 871l5 7h1a2.500 2.500 0 012.500 2.500v20a2.500 2.500 0 01-2.500 2.500h-12a2.500 2.500 0 01-2.500-2.500v-20a2.500 2.500 0 012.500-2.500h1z"/>
                  <path d="M530 895l5 7h1a2.500 2.500 0 012.500 2.500v18a2.500 2.500 0 01-2.500 2.500h-12a2.500 2.500 0 01-2.500-2.500v-18a2.500 2.500 0 012.500-2.500h1z"/>
                </g>
                <g class="tagtxt">
                  <text transform="translate(792 571) rotate(90)">MP</text>
                  <text transform="translate(1056 643) rotate(90)">SCD</text>
                  <text transform="translate(984 667) rotate(90)">EC</text>
                  <text transform="translate(936 691) rotate(90)">SO</text>
                  <text transform="translate(768 715) rotate(90)">IES</text>
                  <text transform="translate(744 739) rotate(90)">LMD</text>
                  <text transform="translate(720 763) rotate(90)">ES</text>
                  <text transform="translate(696 787) rotate(90)">TOC</text>
                  <text transform="translate(672 811) rotate(90)">FIS</text>
                  <text transform="translate(648 835) rotate(90)">FBD</text>
                  <text transform="translate(624 859) rotate(90)">ALG</text>
                  <text transform="translate(576 883) rotate(90)">ED</text>
                  <text transform="translate(528 907) rotate(90)">FS</text>
                </g>
              </svg>
            </div>
          </div>
        </section>
      </div>
    </div>
    <div class="scroll"><div class="thumb"></div></div>
  </div>
</div>
</body>
</html>
```

FILE: styles.css
```css
* { box-sizing: border-box; }
html, body { margin: 0; padding: 0; background: #fff; }
body { padding: 45px; height: 1008px; overflow: hidden; font-family: "Liberation Sans", Arial, sans-serif; color: #24292e; font-size: 14px; }
.sprites { position: absolute; }
a { color: inherit; text-decoration: none; }
svg { display: block; flex: none; }

.window { width: 1125px; height: 918px; display: flex; flex-direction: column; overflow: hidden; background: #fff; box-shadow: 0 5px 28px rgba(0,0,0,.62); }

/* tab strip */
.tabbar { height: 33px; flex: none; display: flex; align-items: stretch; background: #e1e2e4; border-bottom: 1px solid #a8a9aa; font-family: "Noto Sans", sans-serif; }
.tab-spacer { width: 40px; background: #e9eaec; border-right: 1px solid #b5b5b7; }
.tab { width: 225px; height: 33px; display: flex; align-items: center; padding: 0 0 1px 9px; background: #f5f6f7; border-top: 2px solid #0a84ff; border-right: 1px solid #a8a9aa; }
.tab-title { margin-left: 6px; width: 165px; white-space: nowrap; font-size: 13.300px; color: #18191a; -webkit-mask-image: linear-gradient(90deg, #000 135px, transparent 165px); mask-image: linear-gradient(90deg, #000 135px, transparent 165px); }
.tab-x { margin-left: 5px; fill: none; stroke: #2a2a2e; stroke-width: 1.6; }
.newtab { margin: 8px 0 0 8px; fill: none; stroke: #4a4a4f; stroke-width: 1.7; }
.winctl { margin-left: auto; display: flex; align-items: center; padding-right: 9px; }
.chev { fill: none; stroke: #4a4a4f; stroke-width: 1.1; margin-right: 16px; }
.chev.up { margin-right: 14px; }
.close circle { fill: #e0455f; }
.close path { stroke: #fff; stroke-width: 1.1; fill: none; }

/* toolbar */
.toolbar { height: 40px; flex: none; display: flex; align-items: center; background: #f5f6f7; }
.tb { fill: none; stroke: #4a4a4f; stroke-width: 1.6; }
.backbtn { width: 34px; height: 34px; margin-left: 3px; border: 1px solid #b1b1b3; border-radius: 50%; background: #fff; display: flex; align-items: center; justify-content: center; }
.fwd { margin-left: 8px; stroke: #b0b1b3; }
.reload { margin-left: 16px; }
.tb .solid { fill: #4a4a4f; stroke: none; }
.urlbar { width: 654px; height: 30px; margin-left: 75px; display: flex; align-items: center; background: #fff; border: 1px solid #cfcfd1; border-radius: 4px; box-shadow: 0 1px 2px rgba(0,0,0,.06); font-family: "Noto Sans", sans-serif; }
.shield { margin-left: 7px; fill: none; stroke: #6a6a6e; stroke-width: 1.6; }
.shield .thin { stroke-width: 2.5; stroke: #9a9a9c; }
.urlsep { width: 1px; height: 24px; background: #d4d4d6; margin-left: 7px; }
.lock { margin-left: 8px; fill: #6a6a6e; fill-rule: evenodd; }
.url { margin-left: 10px; font-size: 14px; color: #737373; white-space: nowrap; }
.url b { font-weight: 400; color: #0c0c0d; }
.dots { margin-left: auto; display: flex; gap: 2px; }
.dots i { width: 4px; height: 4px; border-radius: 50%; background: #6f6f72; }
.urlstar { margin: 0 6px 0 13px; fill: none; stroke: #5f5f63; stroke-width: 1.7; stroke-linejoin: round; }
.tb-right { display: flex; align-items: center; margin-left: 67px; }
.tbi { position: relative; width: 32px; height: 24px; display: flex; align-items: center; justify-content: center; }
.dl { fill: none; stroke: #0a84ff; stroke-width: 1.8; }
.lib { fill: none; stroke: #4a4a4f; stroke-width: 1.8; }
.ublock em { position: absolute; left: 11px; top: 8px; font: 700 6.500px "Liberation Sans", sans-serif; color: #fff; }
.badge { position: absolute; left: 17px; top: -1px; width: 14px; height: 11px; border-radius: 2px; background: #666; color: #fff; font: 10px/11px "Noto Sans", sans-serif; text-align: center; }
.tbsep { width: 1px; height: 33px; background: #d8d8da; margin-left: 3px; }
.burger { margin-left: 14px; fill: none; stroke: #4a4a4f; stroke-width: 1.8; }

/* bookmarks */
.bookmarks { height: 32px; flex: none; display: flex; align-items: center; padding: 1px 0 0 6px; background: #f5f6f7; border-bottom: 1px solid #c6c7c8; }
.bm { width: 28px; height: 16px; display: flex; align-items: center; justify-content: center; }
.bm-g { width: 16px; margin: 0 6px; background: #eee8d5; color: #8a6a44; font: 19px/12px "Liberation Serif", serif; }
.bm-w { width: 16px; margin: 0 6px; background: #fff; color: #111; font: 15px/16px "Liberation Serif", serif; }
.bm-sync { width: auto; margin-left: 6px; gap: 4px; font: 13.300px "Noto Sans", sans-serif; color: #18191a; }
.globe { fill: none; stroke: #4a4a4f; stroke-width: 1.300; }

/* viewport */
.viewport { flex: 1; min-height: 0; display: flex; }
.page { width: 1109px; flex: none; display: flex; flex-direction: column; overflow: hidden; }
.scroll { width: 16px; flex: none; background: #f5f6f7; padding: 5px 5px 0; }
.thumb { width: 6px; height: 580px; border-radius: 3px; background: #8f9193; }

/* github header */
.gh-head { height: 62px; flex: none; display: flex; align-items: center; padding: 0 32px; background: #24292e; color: #fff; }
.gh-logo { fill: #fff; }
.search { width: 272px; height: 30px; margin-left: 16px; padding: 0 8px 0 12px; display: flex; align-items: center; justify-content: space-between; border: 1px solid #444d56; border-radius: 6px; color: #c7cbcf; }
.search span { padding-bottom: 2px; }
.search kbd { width: 19px; height: 19px; border: 1px solid #5a636b; border-radius: 3px; font: 11px/18px "Liberation Sans", sans-serif; text-align: center; color: #959da5; }
.gh-nav { display: flex; gap: 16px; margin-left: 16px; padding-bottom: 2px; font-weight: 700; }
.gh-right { margin-left: auto; display: flex; align-items: center; }
.gh-ico { fill: #fff; margin-left: 1px; }
.plus { margin-left: 18px; }
.caret { display: block; width: 0; height: 0; border: 4px solid transparent; border-top-color: #fff; border-bottom-width: 0; margin-left: 5px; }
.caret.dark { border-top-color: #586069; margin-left: 7px; }
.avatar { margin-left: 17px; fill: none; }
.av-o { stroke: #6a7077; stroke-width: 1; stroke-dasharray: 1.500 1; }
.av-i { stroke: #d6d8da; stroke-width: 1.700; }

/* repo head */
.repohead { height: 112px; flex: none; background: #fafbfc; border-bottom: 1px solid #e1e4e8; padding: 18px 32px 0; display: flex; flex-direction: column; }
.repotop { flex: none; display: flex; justify-content: space-between; align-items: flex-start; height: 44px; }
.reponame { margin: -2px 0 0; display: flex; align-items: center; font-size: 20px; line-height: 26px; font-weight: 400; color: #0366d6; }
.ico-repo { fill: #586069; margin: 4px 8px 0 2px; width: 14px; }
.reponame .slash { margin: 0 3px 0 4px; color: #586069; }
.reponame .strong { font-weight: 700; letter-spacing: -.05px; }
.actions { display: flex; gap: 10px; }
.btnpair { display: flex; height: 28px; border: 1px solid #dcdee1; border-radius: 6px; background: #fff; box-shadow: 0 1px 0 rgba(27,31,35,.04); font-size: 12px; overflow: hidden; }
.btn { display: flex; align-items: center; padding-left: 12px; background: #fafbfc; border-right: 1px solid #dcdee1; color: #24292e; }
.btn .octi { margin-right: 4px; position: relative; top: 2px; }
.btxt { padding-bottom: 2px; }
.octi { fill: #6a737d; fill-rule: evenodd; }
.w-watch { width: 107px; }
.w-star { width: 69px; }
.w-star .btxt { margin-left: 3px; }
.w-fork { width: 69px; }
.count { display: flex; align-items: center; justify-content: center; font-weight: 700; }
.w-c1 { width: 29px; padding-right: 2px; } .w-c2 { width: 32px; } .w-c3 { width: 30px; padding-right: 2px; }

.repotabs { flex: none; display: flex; height: 50px; }
.rt { display: flex; align-items: center; height: 50px; padding: 0 16px; border-bottom: 2px solid transparent; color: #24292e; white-space: nowrap; }
.rt .octi { margin-right: 8px; fill: #959da5; }
.rt:nth-child(1) { margin-right: 1px; } .rt:nth-child(1) .octi { margin-right: 7px; }
.rt:nth-child(2) { margin-right: 2px; } .rt:nth-child(2) .octi { margin-right: 7px; }
.rt:nth-child(3) { margin-right: 3px; } .rt:nth-child(3) .octi { margin-right: 10px; }
.rt:nth-child(4) { margin-right: 2px; } .rt:nth-child(4) .octi { margin-right: 9px; }
.rt:nth-child(5) { margin-right: 3px; }
.rt:nth-child(6) { margin-right: 1px; }
.rt:nth-child(7) { margin-right: 3px; } .rt:nth-child(7) .octi { margin-right: 7px; }
.rt.active { font-weight: 700; border-bottom-color: #f9826c; }
.rt.active .octi { fill: #24292e; margin-right: 6px; }

/* main */
.main { flex: 1; display: flex; gap: 32.600px; padding: 32px 32px 0; min-height: 0; }
.side { width: 237px; height: 343px; flex: none; display: flex; flex-direction: column; border: 1px solid #e1e4e8; border-radius: 6px; overflow: hidden; background: #fff; }
.side a { height: 38px; flex: none; padding: 0 16px; line-height: 35px; border-bottom: 1px solid #e1e4e8; }
.side a:last-child { border-bottom: 0; }
.side .sel { border-left: 2px solid #f9826c; padding-left: 14px; }
.content { width: 775.400px; flex: none; display: flex; flex-direction: column; }
h2 { margin: 0; height: 45px; padding-top: 1px; flex: none; font-size: 24px; line-height: 30px; font-weight: 400; border-bottom: 1px solid #e1e4e8; }
.content p { margin: 15px 0 12px; line-height: 20px; flex: none; }
.graph { flex: 1; display: flex; flex-direction: column; border: 1px solid #e1e4e8; border-bottom: 0; border-radius: 6px 6px 0 0; overflow: hidden; }
.gh { height: 40px; flex: none; display: flex; background: #fafbfc; border-bottom: 1px solid #e1e4e8; font-size: 12px; }
.gh-owners { width: 119px; margin: 10px 0 9px; padding-left: 1px; border-right: 1px solid #e1e4e8; line-height: 19px; text-align: center; color: #24292e; }
.gh-month { flex: 1; padding-left: 533px; line-height: 40px; font-weight: 700; color: #24292e; }
.gbody { flex: 1; display: flex; min-height: 0; }
.owners { width: 119.400px; flex: none; display: flex; flex-direction: column; border-right: 1px solid #e1e4e8; }
.owner1 { height: 414px; flex: none; padding-top: 27px; display: flex; align-items: center; justify-content: center; font-size: 13px; border-bottom: 1px solid #e1e4e8; }
.chart { width: 654px; height: 474px; }

.rowline { stroke: #e1e4e8; stroke-width: 1; }
.ticks path { stroke: #e1e4e8; stroke-width: 1; fill: none; }
.dates text { font: 12px "Liberation Sans", sans-serif; fill: #24292e; text-anchor: middle; }
.l { fill: none; stroke-width: 2; }
.tags path { fill: #24292e; filter: drop-shadow(0 1px 0 rgba(0,0,0,.15)); }
.tagtxt text { font: 11px "Liberation Sans", sans-serif; fill: #f0f0f0; }
.branch path { fill: #24292e; }
.branch .bl { fill: none; stroke: #24292e; stroke-width: 2; }

.c0 .l { stroke: #24292e; } .c0 path:not(.l), .c0 circle { fill: #24292e; }
.c1 .l { stroke: #3498db; } .c1 path:not(.l), .c1 circle { fill: #3498db; }
.c2 .l { stroke: #2ecc71; } .c2 path:not(.l), .c2 circle { fill: #2ecc71; }
.c3 .l { stroke: #8e44ad; } .c3 path:not(.l), .c3 circle { fill: #8e44ad; }
.c4 .l { stroke: #f1c40f; } .c4 path:not(.l), .c4 circle { fill: #f1c40f; }
.c5 .l { stroke: #e67e22; } .c5 path:not(.l), .c5 circle { fill: #e67e22; }
.c6 .l { stroke: #34495e; } .c6 path:not(.l), .c6 circle { fill: #34495e; }
.c7 .l { stroke: #e74c3c; } .c7 path:not(.l), .c7 circle { fill: #e74c3c; }
.c8 .l { stroke: #2980b9; } .c8 path:not(.l), .c8 circle { fill: #2980b9; }
.c9 .l { stroke: #1abc9c; } .c9 path:not(.l), .c9 circle { fill: #1abc9c; }
.c10 .l { stroke: #9b59b6; } .c10 path:not(.l), .c10 circle { fill: #9b59b6; }
.c11 .l { stroke: #f39c12; } .c11 path:not(.l), .c11 circle { fill: #f39c12; }
.c12 .l { stroke: #7f8c8d; } .c12 path:not(.l), .c12 circle { fill: #7f8c8d; }
.c13 .l { stroke: #2c3e50; } .c13 path:not(.l), .c13 circle { fill: #2c3e50; }
.c14 .l { stroke: #d35400; } .c14 path:not(.l), .c14 circle { fill: #d35400; }
.c15 .l { stroke: #e74c3c; } .c15 path:not(.l), .c15 circle { fill: #e74c3c; }
```
